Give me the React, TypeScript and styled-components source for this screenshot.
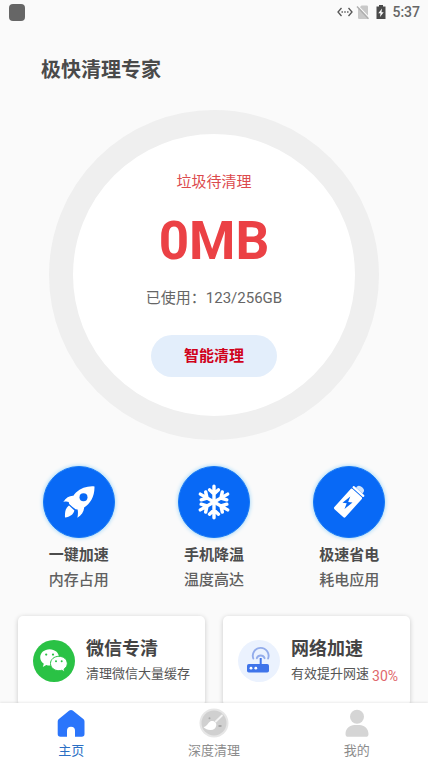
import React from "react";
import styled, { createGlobalStyle } from "styled-components";

const GlobalStyle = createGlobalStyle`
  * { box-sizing: border-box; }
  body {
    margin: 0;
    background: #fafafa;
    color: #444;
    font-family: Roboto, "Noto Sans CJK SC", sans-serif;
  }
  h1, h2, p { margin: 0; }
  button { font: inherit; color: inherit; border: 0; background: none; padding: 0; cursor: pointer; }
  svg { display: block; flex: none; }
`;

const Screen = styled.div`
  height: 100vh;
  display: flex;
  flex-direction: column;
`;

const StatusBar = styled.header`
  flex: none;
  height: 24px;
  padding: 0 8px 0 9px;
  display: flex;
  align-items: center;
  justify-content: space-between;
`;

const AppBadge = styled.span`
  width: 16px;
  height: 17px;
  border-radius: 4px;
  background: #666;
`;

const StatusIcons = styled.div`
  display: flex;
  align-items: center;
  gap: 2px;
  color: #555;
`;

const Clock = styled.time`
  font-size: 14px;
  line-height: 24px;
  font-weight: 500;
  color: #666;
  margin-left: 1px;
`;

const Content = styled.main`
  flex: 1;
  min-height: 0;
  overflow-y: auto;
  scrollbar-width: none;
`;

const Title = styled.h1`
  padding: 31px 41px 0;
  font-size: 20px;
  line-height: 30px;
  font-weight: 700;
  color: #4a4a4a;
`;

const Dial = styled.section`
  width: 330px;
  height: 330px;
  margin: 25px auto 0;
  padding-top: 36px;
  border: 24px solid #efefef;
  border-radius: 50%;
  background: #fff;
  display: flex;
  flex-direction: column;
  align-items: center;
`;

const DialCaption = styled.p<{ $color: string }>`
  font-size: 15px;
  line-height: 24px;
  color: ${(p) => p.$color};
`;

const JunkSize = styled.p`
  margin: 15px 0 13px;
  font-size: 53px;
  line-height: 64px;
  font-weight: 700;
  color: #eb4145;
`;

const CleanButton = styled.button`
  && {
    width: 126px;
    height: 42px;
    margin-top: 25px;
    border-radius: 21px;
    background: #e3eefb;
    color: #d0021b;
    font-size: 15px;
    line-height: 42px;
    font-weight: 700;
  }
`;

const Tools = styled.section`
  display: grid;
  grid-template-columns: repeat(3, 1fr);
  padding: 0 11px;
  margin-top: 26px;
`;

const Tool = styled.button`
  display: flex;
  flex-direction: column;
  align-items: center;
`;

const ToolDisc = styled.span`
  width: 72px;
  height: 72px;
  margin-bottom: 5px;
  border-radius: 50%;
  background: #0869f6;
  border: 1px solid #1678f5;
  box-shadow: 0 0 4px #8fd0fa;
  display: flex;
  align-items: center;
  justify-content: center;
`;

const ToolText = styled.span<{ $strong?: boolean }>`
  font-size: 15px;
  line-height: 25px;
  font-weight: ${(p) => (p.$strong ? 700 : 500)};
  color: ${(p) => (p.$strong ? "#4c4c4c" : "#606060")};
`;

const Cards = styled.section`
  display: grid;
  grid-template-columns: repeat(2, 1fr);
  gap: 18px;
  padding: 23px 18px 16px;
`;

const Card = styled.button`
  && {
    height: 90px;
    padding-left: 15px;
    border-radius: 5px;
    background: #fff;
    box-shadow: 0 1px 5px rgba(0, 0, 0, 0.2);
    display: flex;
    align-items: center;
    gap: 11px;
    text-align: left;
    white-space: nowrap;
  }
`;

const CardText = styled.span`
  display: flex;
  flex-direction: column;
`;

const CardTitle = styled.span`
  font-size: 18px;
  line-height: 26px;
  font-weight: 700;
  color: #444;
`;

const CardNote = styled.span`
  display: flex;
  align-items: baseline;
  gap: 3px;
  font-size: 13px;
  line-height: 24px;
  color: #555;
`;

const Percent = styled.span`
  align-self: flex-end;
  font-size: 14px;
  line-height: 20px;
  color: #e0686c;
`;

const NavBar = styled.nav`
  flex: none;
  position: relative;
  display: grid;
  grid-template-columns: repeat(3, 1fr);
  height: 59px;
  background: #fff;
  box-shadow: 0 -1px 2px rgba(0, 0, 0, 0.08);
`;

const NavItem = styled.a<{ $active?: boolean }>`
  display: flex;
  flex-direction: column;
  align-items: center;
  gap: 3px;
  padding-top: 5px;
  font-size: 13px;
  line-height: 20px;
  text-decoration: none;
  color: ${(p) => (p.$active ? "#2b6fc4" : "#8c8c8c")};
`;

const EthernetIcon = () => (
  <svg width="16" height="14" viewBox="0 0 16 14" fill="none" stroke="#555" strokeWidth="1.3">
    <path d="M4.500 3 1 7l3.500 4M11.500 3 15 7l-3.500 4" />
    <path d="M4.500 7h1.400M7.300 7h1.400M10.100 7h1.400" strokeWidth="1.500" />
  </svg>
);

const NoSimIcon = () => (
  <svg width="16" height="16" viewBox="0 0 16 16">
    <path d="M6.500 1.500h5.300A1.200 1.200 0 0 1 13 2.700V15H4.200A1.200 1.200 0 0 1 3 13.800V5z" fill="#c8c8c8" />
    <path d="M3.200 2.200 14.500 14" stroke="#fafafa" strokeWidth="1.200" />
    <path d="M2 2.500 13.500 14.800" stroke="#adadad" strokeWidth="1.300" />
  </svg>
);

const ChargingIcon = () => (
  <svg width="16" height="16" viewBox="0 0 16 16">
    <path d="M6 1h4v1.500h2.500V15h-9V2.500H6z" fill="#4a4a4a" />
    <path d="M9 4.500 5.300 9.300h2.200L7 13l3.700-4.800H8.500z" fill="#fafafa" />
  </svg>
);

const RocketIcon = () => (
  <svg width="36" height="36" viewBox="0 0 36 36">
    <path
      d="M33.500 2.500C27 1.800 20 4 15 8.500c-1 1-1.800 2-2.600 3.200C8.500 11.500 5 13.500 2.300 18c2.200-.6 4-.6 5.400.1L8.200 20c1.700 1.600 4.300 4 6.400 5.200l2 .4c.5 2 .5 4.700-.2 8.200 4-2.600 6.600-6 6.700-10.200 6-4 10.600-11 10.400-21.100z"
      fill="#fff"
    />
    <circle cx="22.500" cy="13.200" r="4" fill="#0869f6" />
    <path d="M8 21.500c-3.300 2.200-4.300 6-4 12 5-.8 8.200-2.600 9.400-7z" fill="#fff" />
  </svg>
);

const SNOW_ARMS = [0, 60, 120, 180, 240, 300];

const SnowflakeIcon = () => (
  <svg width="36" height="36" viewBox="0 0 36 36" fill="none" stroke="#fff" strokeWidth="3.400" strokeLinecap="round" strokeLinejoin="round">
    {SNOW_ARMS.map((angle) => (
      <path key={angle} d="M18 18V2.200M13.500 5.800 18 10l4.500-4.200" transform={`rotate(${angle} 18 18)`} />
    ))}
  </svg>
);

const BatteryIcon = () => (
  <svg width="36" height="36" viewBox="0 0 36 36">
    <g transform="rotate(42 18 18)">
      <path d="M13.700 2.700V1.500a4.300 3.200 0 0 1 8.600 0v1.200z" fill="#cfe3fb" />
      <rect x="10.500" y="2.700" width="15" height="2.400" rx="1" fill="#fff" />
      <rect x="10.500" y="6" width="15" height="27" rx="1.500" fill="#fff" />
    </g>
    <path d="m19.300 12.500-7.800 6.200 4.200.6-2.200 5.700 8-6.600-4.300-.5z" fill="#0869f6" />
  </svg>
);

const WeChatIcon = () => (
  <svg width="42" height="42" viewBox="0 0 42 42">
    <circle cx="21" cy="21" r="21" fill="#2ac245" />
    <path d="M16.600 9.300c-5.300 0-9.400 3.600-9.400 8.100 0 2.600 1.400 4.800 3.600 6.300l-1 3.200 3.500-1.900c1.100.4 2.100.5 3.300.5 5.300 0 9.400-3.600 9.400-8.100s-4.100-8.100-9.400-8.100z" fill="#fff" />
    <path d="M25.900 16.300c-4.800 0-8.400 3.200-8.400 7.200s3.600 7.200 8.400 7.200c1 0 1.900-.1 2.800-.4l3.200 1.700-.9-2.800c2-1.400 3.300-3.400 3.300-5.700 0-4-3.700-7.200-8.400-7.200z" fill="#fff" stroke="#2ac245" />
    <g fill="#2ac245">
      <circle cx="13.200" cy="14.600" r="1.100" />
      <circle cx="20" cy="14.600" r="1.100" />
      <circle cx="23" cy="21.200" r="1" />
      <circle cx="28.700" cy="21.200" r="1" />
    </g>
  </svg>
);

const RouterIcon = () => (
  <svg width="42" height="42" viewBox="0 0 42 42">
    <circle cx="21" cy="21" r="21" fill="#ebf2fe" />
    <rect x="9" y="24" width="22" height="8.500" rx="1.800" fill="#3f74ea" />
    <path d="M22.700 18v7" stroke="#3f74ea" strokeWidth="2" />
    <g fill="none" stroke="#93aceb" strokeWidth="1.900" strokeLinecap="round">
      <path d="M15.300 18.500a7.900 7.900 0 1 1 14.800 0" />
      <path d="M18.800 18.200a4.200 4.200 0 0 1 7.800 0" />
    </g>
    <circle cx="13" cy="28.200" r="1.400" fill="#fff" />
    <circle cx="17.800" cy="28.200" r="1.400" fill="#fff" />
  </svg>
);

const HomeIcon = () => (
  <svg width="30" height="30" viewBox="0 0 30 30">
    <path
      d="M13.300 2.600a2.700 2.700 0 0 1 3.400 0l10.600 8.300c.8.600 1.200 1.500 1.200 2.500V26a2.800 2.800 0 0 1-2.800 2.800H19v-6a4 4 0 0 0-8 0v6H4.500A2.800 2.800 0 0 1 1.700 26V13.400c0-1 .4-1.900 1.200-2.500z"
      fill="#2b75fb"
    />
  </svg>
);

const BroomIcon = () => (
  <svg width="30" height="30" viewBox="0 0 30 30">
    <circle cx="15" cy="15" r="14.500" fill="#e6e6e6" />
    <circle cx="15" cy="15" r="12.500" fill="#d0d0d0" />
    <path d="M23 7.500 16.800 13.500" stroke="#f4f4f4" strokeWidth="1.800" strokeLinecap="round" />
    <path d="M11.500 13.300c2.700-1.300 6.200 1 5.800 3.900-.4 3-2.600 5-6.100 4.800-2.600-.2-5-1.200-6.700-2.800 3.300-.4 4.300-4.300 7-5.900z" fill="#fff" />
    <circle cx="10.500" cy="10.200" r="1" fill="#aaa" />
    <ellipse cx="21" cy="18" rx="1.800" ry="1.100" fill="#a2a2a2" />
  </svg>
);

const PersonIcon = () => (
  <svg width="30" height="30" viewBox="0 0 30 30" fill="#d5d5d5">
    <circle cx="15" cy="8.700" r="7" />
    <path d="M3.500 26c0-5.500 4.200-9 9-9h5c4.800 0 9 3.500 9 9 0 2-1 2.800-2.800 2.800H6.300c-1.800 0-2.800-.8-2.800-2.800z" />
  </svg>
);

const TOOLS = [
  { name: "一键加速", note: "内存占用", Icon: RocketIcon },
  { name: "手机降温", note: "温度高达", Icon: SnowflakeIcon },
  { name: "极速省电", note: "耗电应用", Icon: BatteryIcon },
];

const CARDS = [
  { name: "微信专清", note: "清理微信大量缓存", percent: "", Icon: WeChatIcon },
  { name: "网络加速", note: "有效提升网速", percent: "30%", Icon: RouterIcon },
];

const TABS = [
  { id: "home", name: "主页", active: true, Icon: HomeIcon },
  { id: "deep", name: "深度清理", active: false, Icon: BroomIcon },
  { id: "mine", name: "我的", active: false, Icon: PersonIcon },
];

export default function App() {
  return (
    <Screen>
      <GlobalStyle />
      <StatusBar>
        <AppBadge />
        <StatusIcons>
          <EthernetIcon />
          <NoSimIcon />
          <ChargingIcon />
          <Clock>5:37</Clock>
        </StatusIcons>
      </StatusBar>
      <Content>
        <Title>极快清理专家</Title>
        <Dial>
          <DialCaption $color="#dc4a4d">垃圾待清理</DialCaption>
          <JunkSize>0MB</JunkSize>
          <DialCaption $color="#666">已使用：123/256GB</DialCaption>
          <CleanButton type="button">智能清理</CleanButton>
        </Dial>
        <Tools>
          {TOOLS.map(({ name, note, Icon }) => (
            <Tool key={name} type="button">
              <ToolDisc>
                <Icon />
              </ToolDisc>
              <ToolText $strong>{name}</ToolText>
              <ToolText>{note}</ToolText>
            </Tool>
          ))}
        </Tools>
        <Cards>
          {CARDS.map(({ name, note, percent, Icon }) => (
            <Card key={name} type="button">
              <Icon />
              <CardText>
                <CardTitle>{name}</CardTitle>
                <CardNote>
                  {note}
                  {percent && <Percent>{percent}</Percent>}
                </CardNote>
              </CardText>
            </Card>
          ))}
        </Cards>
      </Content>
      <NavBar>
        {TABS.map(({ id, name, active, Icon }) => (
          <NavItem key={id} href={`#${id}`} $active={active} aria-current={active ? "page" : undefined}>
            <Icon />
            {name}
          </NavItem>
        ))}
      </NavBar>
    </Screen>
  );
}
